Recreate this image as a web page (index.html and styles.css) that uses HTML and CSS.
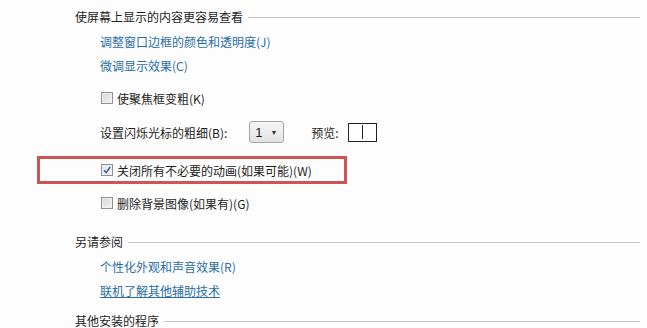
FILE: index.html
```html
<!DOCTYPE html>
<html lang="zh-CN">
<head>
    <meta charset="UTF-8">
    <title>轻松访问中心</title>
    <link rel="stylesheet" href="styles.css">
</head>
<body>
    <div class="panel">
        <div class="group-title">使屏幕上显示的内容更容易查看</div>
        <div class="items">
            <a class="link first" href="#">调整窗口边框的颜色和透明度(J)</a>
            <a class="link" href="#">微调显示效果(C)</a>

            <label class="check-row row-focus">
                <span class="box"></span>
                <span>使聚焦框变粗(K)</span>
            </label>

            <div class="cursor-row">
                <span>设置闪烁光标的粗细(B):</span>
                <span class="select">1<span class="arrow">&#9660;</span></span>
                <span class="preview-label">预览:</span>
                <span class="preview"><span class="caret"></span></span>
            </div>

            <label class="check-row marked">
                <span class="box checked">
                    <svg width="10" height="10" viewBox="0 0 10 10"><path d="M2 5.2 L4.2 7.6 L8.2 2" fill="none" stroke="#3c5aa0" stroke-width="1.6"/></svg>
                </span>
                <span>关闭所有不必要的动画(如果可能)(W)</span>
            </label>

            <label class="check-row row-bg">
                <span class="box"></span>
                <span>删除背景图像(如果有)(G)</span>
            </label>
        </div>

        <div class="group-title second">另请参阅</div>
        <div class="items">
            <a class="link first" href="#">个性化外观和声音效果(R)</a>
            <a class="link underline" href="#">联机了解其他辅助技术</a>
        </div>

        <div class="group-title third">其他安装的程序</div>
    </div>
</body>
</html>
```

FILE: styles.css
```css
body {
    margin: 0;
    background-color: #fcfdfc;
    font-family: "Noto Sans CJK SC", sans-serif;
    font-size: 12px;
    color: #1e1e1e;
}
.panel {
    padding: 9px 7px 0 75px;
}
.group-title {
    display: flex;
    align-items: center;
    gap: 5px;
    height: 16px;
    line-height: 16px;
}
.group-title::after {
    content: "";
    flex: 1;
    border-top: 1px solid #c4c6c6;
}
.group-title.second {
    margin-top: 19px;
}
.group-title.third {
    margin-top: 11px;
    height: 14px;
    line-height: 14px;
}
.items {
    padding-left: 25px;
}
.link {
    display: block;
    height: 24px;
    line-height: 24px;
    color: #2a6ea8;
    text-decoration: none;
}
.link.first {
    margin-top: 5px;
}
.link.underline {
    text-decoration: underline;
}
.check-row {
    display: flex;
    align-items: center;
    gap: 4px;
    height: 24px;
    padding-left: 1px;
}
.row-focus {
    margin-top: 8px;
}
.row-bg {
    margin-top: 7px;
}
.box {
    width: 10px;
    height: 10px;
    border: 1px solid #8f9090;
    background: linear-gradient(135deg, #d6d6d6, #f4f4f4);
    box-shadow: inset 0 0 0 1px #f0f0f0;
    display: flex;
    align-items: center;
    justify-content: center;
}
.box.checked {
    background: linear-gradient(135deg, #dfe3f0, #f7f8fb);
}
.marked {
    margin: 11px 0 0 -63px;
    width: 243px;
    height: 22px;
    padding-left: 61px;
    border: 3px solid #cf5454;
}
.cursor-row {
    display: flex;
    align-items: center;
    height: 26px;
    margin-top: 9px;
}
.select {
    display: flex;
    align-items: center;
    justify-content: space-between;
    box-sizing: border-box;
    width: 35px;
    height: 22px;
    margin-left: 22px;
    padding: 0 6px 0 5px;
    border: 1px solid #a2a4a6;
    border-radius: 3px;
    background: linear-gradient(#f6f6f6, #e2e2e2);
    font-family: "Liberation Sans", sans-serif;
    font-size: 13px;
}
.arrow {
    font-size: 7px;
    color: #333;
}
.preview-label {
    margin-left: 27px;
}
.preview {
    display: flex;
    justify-content: center;
    align-items: center;
    box-sizing: border-box;
    width: 29px;
    height: 19px;
    margin-left: 9px;
    border: 1px solid #222;
    background: #fff;
}
.caret {
    width: 1px;
    height: 14px;
    background: #222;
}
```
